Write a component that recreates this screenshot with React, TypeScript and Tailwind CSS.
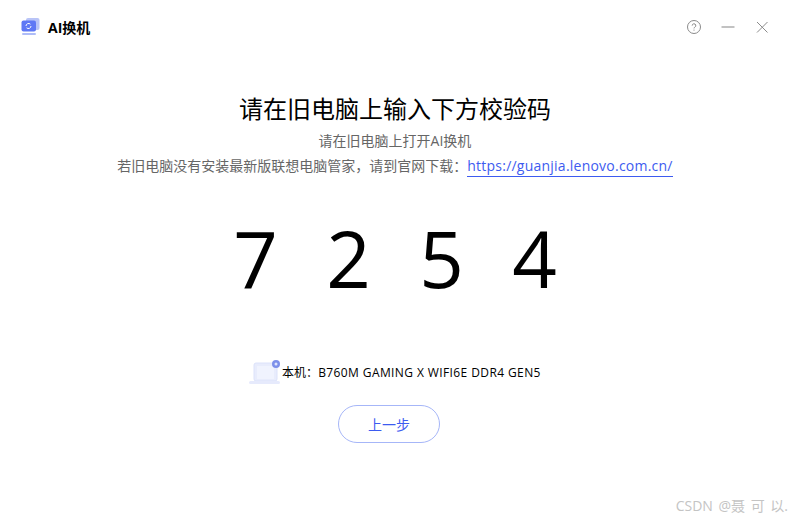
const font = { fontFamily: '"Open Sans", "Noto Sans CJK SC", sans-serif' };

function AppLogo() {
  return (
    <svg width="20" height="20" viewBox="0 0 20 20" className="shrink-0">
      <rect x="6" y="1" width="13.5" height="12" rx="2" fill="#b9c4f7" />
      <rect x="1.5" y="3.5" width="14.5" height="11" rx="2" fill="#5f78f5" />
      <rect x="2" y="16" width="14" height="2" rx="1" fill="#aebcf8" />
      <path d="M6 9a2.6 2.6 0 0 1 4.4-1.8M11 9a2.6 2.6 0 0 1-4.4 1.8" stroke="#fff" strokeWidth="1" fill="none" />
    </svg>
  );
}

function LaptopIcon() {
  return (
    <svg width="33" height="28" viewBox="0 0 33 28" className="shrink-0">
      <rect x="5" y="4" width="23" height="18" rx="2" fill="#e8ecfc" stroke="#dce2fa" />
      <rect x="8" y="7" width="17" height="13" fill="#f0f3fe" />
      <rect x="0" y="22" width="31" height="3" rx="1.5" fill="#e6eafc" />
      <circle cx="27" cy="5" r="4" fill="#7d90ea" />
      <circle cx="27" cy="5" r="1.5" fill="#dfe5fb" />
    </svg>
  );
}

export default function App() {
  return (
    <div className="w-[790px] h-[520px] bg-white flex flex-col overflow-hidden relative" style={font}>
      {/* Title bar */}
      <div className="h-[54px] flex items-center justify-between pl-[20px] pr-[21px] shrink-0">
        <div className="flex items-center gap-[8px]">
          <AppLogo />
          <span className="text-[14px] font-bold text-black">AI换机</span>
        </div>
        <div className="flex items-center gap-[20px]">
          <svg width="14" height="14" viewBox="0 0 14 14" fill="none" stroke="#8a8a8a">
            <circle cx="7" cy="7" r="6.5" />
            <path d="M5.2 5.6a1.8 1.8 0 1 1 2.6 1.6c-.6.3-.8.6-.8 1.2" />
            <path d="M7 9.6v1" />
          </svg>
          <svg width="14" height="14" viewBox="0 0 14 14" fill="none" stroke="#999">
            <path d="M0.5 7h13" strokeWidth="1.2" />
          </svg>
          <svg width="14" height="14" viewBox="0 0 14 14" fill="none" stroke="#8a8a8a">
            <path d="M2 2l10.5 10.5M12.5 2L2 12.5" />
          </svg>
        </div>
      </div>

      <div className="flex flex-col items-center">
        <h1 className="mt-[38px] text-[24px] leading-[34px] font-normal text-black">请在旧电脑上输入下方校验码</h1>
        <p className="mt-[5px] text-[14px] leading-[20px] text-[#666]">请在旧电脑上打开AI换机</p>
        <p className="mt-[5px] text-[14px] leading-[20px] text-[#666] flex">
          <span>若旧电脑没有安装最新版联想电脑管家，请到官网下载：</span>
          <span className="text-[#3d5bf0] border-b border-[#3d5bf0] tracking-[0.23px]">https://guanjia.lenovo.com.cn/</span>
        </p>

        <div className="mt-[31px] flex text-[78px] leading-[100px] text-black font-normal">
          <span className="w-[93px] text-center">7</span>
          <span className="w-[93px] text-center">2</span>
          <span className="w-[93px] text-center">5</span>
          <span className="w-[93px] text-center">4</span>
        </div>

        <div className="mt-[51px] flex items-center text-[12px] text-black">
          <LaptopIcon />
          <span>本机：<span className="tracking-[0.4px]">B760M GAMING X WIFI6E DDR4 GEN5</span></span>
        </div>

        <button className="mt-[18px] mr-[12px] w-[102px] h-[38px] rounded-full border border-[#a6b6f8] text-[#3d5bf0] text-[14px] bg-white">上一步</button>
      </div>

      <span className="absolute right-[2px] bottom-[4px] text-[14px] text-[#c4c4c4] [word-spacing:2px]">CSDN @聂 可 以.</span>
    </div>
  );
}
